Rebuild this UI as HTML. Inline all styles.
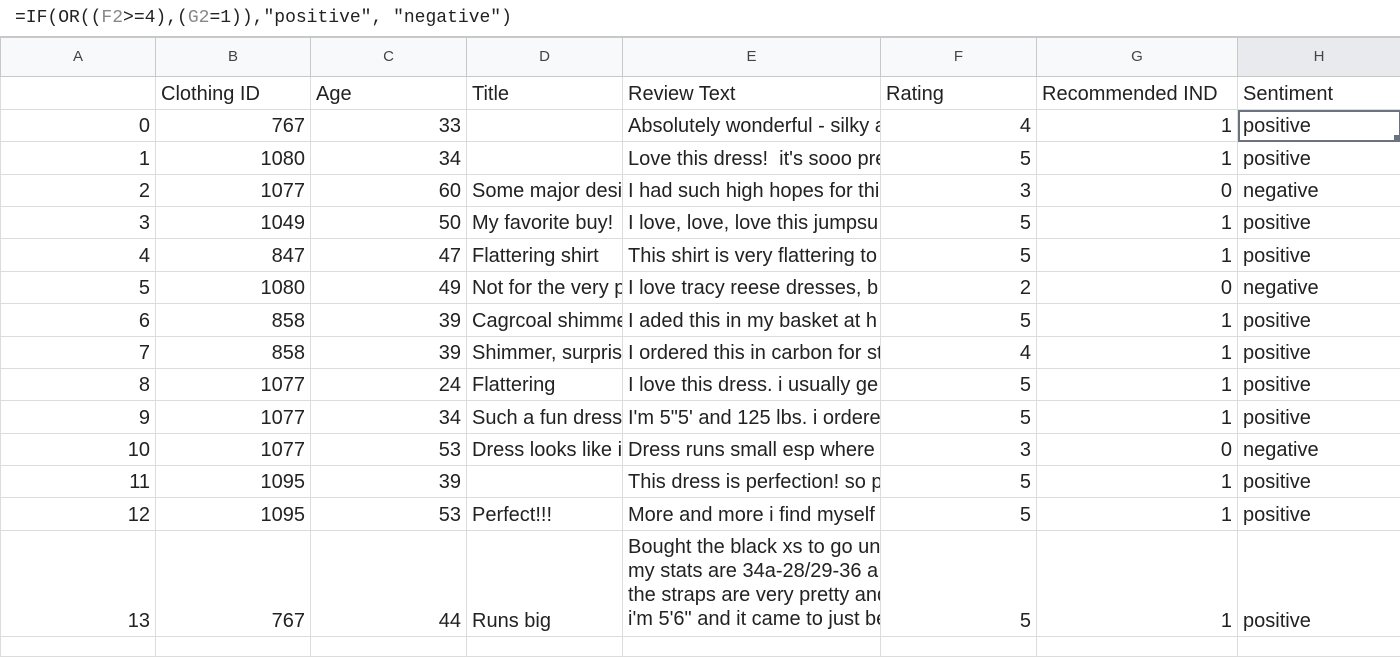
<!DOCTYPE html>
<html><head><meta charset="utf-8"><style>
html,body{margin:0;padding:0;width:1400px;height:644px;overflow:hidden;background:#fff}
.fb{position:absolute;left:0;top:0;width:1400px;height:37px;border-bottom:1px solid #c8c8c8;font:18px "Liberation Mono",monospace;line-height:37px;color:#222;box-sizing:border-box;padding-left:15px;white-space:pre}
.fb .g{color:#888}
table{position:absolute;left:0;top:37px;width:1400px;border-collapse:collapse;table-layout:fixed;font:20px "Liberation Sans",Arial,sans-serif;color:#222}
td{border:1px solid #dcdcdc;padding:0 5px 3px 5px;overflow:hidden;white-space:nowrap;vertical-align:bottom;line-height:24px;text-overflow:clip}
tr.h td{background:#f8f9fa;text-align:center;font-size:15px;color:#444;vertical-align:middle;padding:0;border-color:#c8c8c8}
tr.h td.sel{background:#e8eaed}
td.n{text-align:right}
td.s{position:relative;outline:2px solid #6b7280;outline-offset:-2px}
.sq{position:absolute;right:-1px;bottom:-1px;width:7px;height:7px;background:#6b7280}
.ml{vertical-align:top;padding-top:4px;padding-bottom:0}
</style></head><body>
<div class="fb">=IF(OR((<span class="g">F2</span>&gt;=4),(<span class="g">G2</span>=1)),"positive", "negative")</div>
<table>
<colgroup><col style="width:155px"><col style="width:155px"><col style="width:156px"><col style="width:156px"><col style="width:258px"><col style="width:156px"><col style="width:201px"><col style="width:163px"></colgroup>
<tr class="h" style="height:39px"><td>A</td><td>B</td><td>C</td><td>D</td><td>E</td><td>F</td><td>G</td><td class="sel">H</td></tr>
<tr style="height:33px"><td></td><td>Clothing ID</td><td>Age</td><td>Title</td><td>Review Text</td><td>Rating</td><td>Recommended IND</td><td>Sentiment</td></tr>
<tr style="height:32px"><td class="n">0</td><td class="n">767</td><td class="n">33</td><td></td><td>Absolutely wonderful - silky a</td><td class="n">4</td><td class="n">1</td><td class="s">positive<div class="sq"></div></td></tr>
<tr style="height:33px"><td class="n">1</td><td class="n">1080</td><td class="n">34</td><td></td><td>Love this dress!&nbsp; it's sooo pre</td><td class="n">5</td><td class="n">1</td><td>positive</td></tr>
<tr style="height:32px"><td class="n">2</td><td class="n">1077</td><td class="n">60</td><td>Some major desi</td><td>I had such high hopes for thi</td><td class="n">3</td><td class="n">0</td><td>negative</td></tr>
<tr style="height:32px"><td class="n">3</td><td class="n">1049</td><td class="n">50</td><td>My favorite buy!</td><td>I love, love, love this jumpsu</td><td class="n">5</td><td class="n">1</td><td>positive</td></tr>
<tr style="height:33px"><td class="n">4</td><td class="n">847</td><td class="n">47</td><td>Flattering shirt</td><td>This shirt is very flattering to</td><td class="n">5</td><td class="n">1</td><td>positive</td></tr>
<tr style="height:32px"><td class="n">5</td><td class="n">1080</td><td class="n">49</td><td>Not for the very p</td><td>I love tracy reese dresses, b</td><td class="n">2</td><td class="n">0</td><td>negative</td></tr>
<tr style="height:33px"><td class="n">6</td><td class="n">858</td><td class="n">39</td><td>Cagrcoal shimme</td><td>I aded this in my basket at h</td><td class="n">5</td><td class="n">1</td><td>positive</td></tr>
<tr style="height:32px"><td class="n">7</td><td class="n">858</td><td class="n">39</td><td>Shimmer, surpris</td><td>I ordered this in carbon for st</td><td class="n">4</td><td class="n">1</td><td>positive</td></tr>
<tr style="height:32px"><td class="n">8</td><td class="n">1077</td><td class="n">24</td><td>Flattering</td><td>I love this dress. i usually ge</td><td class="n">5</td><td class="n">1</td><td>positive</td></tr>
<tr style="height:33px"><td class="n">9</td><td class="n">1077</td><td class="n">34</td><td>Such a fun dress</td><td>I'm 5"5' and 125 lbs. i ordere</td><td class="n">5</td><td class="n">1</td><td>positive</td></tr>
<tr style="height:32px"><td class="n">10</td><td class="n">1077</td><td class="n">53</td><td>Dress looks like i</td><td>Dress runs small esp where</td><td class="n">3</td><td class="n">0</td><td>negative</td></tr>
<tr style="height:32px"><td class="n">11</td><td class="n">1095</td><td class="n">39</td><td></td><td>This dress is perfection! so p</td><td class="n">5</td><td class="n">1</td><td>positive</td></tr>
<tr style="height:33px"><td class="n">12</td><td class="n">1095</td><td class="n">53</td><td>Perfect!!!</td><td>More and more i find myself</td><td class="n">5</td><td class="n">1</td><td>positive</td></tr>
<tr style="height:106px"><td class="n">13</td><td class="n">767</td><td class="n">44</td><td>Runs big</td><td class="ml">Bought the black xs to go un<br>my stats are 34a-28/29-36 a<br>the straps are very pretty and<br>i'm 5'6" and it came to just be</td><td class="n">5</td><td class="n">1</td><td>positive</td></tr>
<tr style="height:20px"><td></td><td></td><td></td><td></td><td></td><td></td><td></td><td></td></tr>
</table>
</body></html>
